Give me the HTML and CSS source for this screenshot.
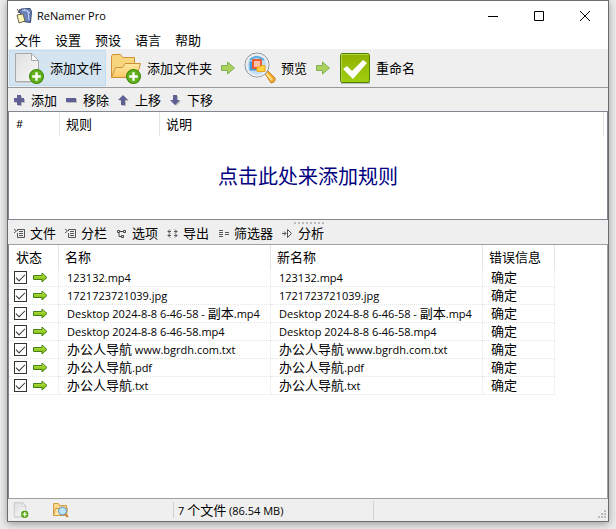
FILE: index.html
```
<!DOCTYPE html>
<html lang="zh-CN">
<head>
    <meta charset="UTF-8">
    <title>ReNamer Pro</title>
    <link rel="stylesheet" href="styles.css">
</head>
<body>
    <svg class="sprite" width="0" height="0" aria-hidden="true">
        <defs>
            <linearGradient id="g-paper" x1="0" y1="0" x2="1" y2="1"><stop offset="0" stop-color="#dedede"/><stop offset="1" stop-color="#fafafa"/></linearGradient>
            <linearGradient id="g-folder" x1="0" y1="0" x2="0" y2="1"><stop offset="0" stop-color="#ffe7a0"/><stop offset="1" stop-color="#f9c869"/></linearGradient>
            <linearGradient id="g-green" x1="0" y1="0" x2="0" y2="1"><stop offset="0" stop-color="#8fb000"/><stop offset="1" stop-color="#a0cf10"/></linearGradient>
            <linearGradient id="g-arrow" x1="0" y1="0" x2="0" y2="1"><stop offset="0" stop-color="#c8ea50"/><stop offset="1" stop-color="#6fb000"/></linearGradient>
        </defs>
        <symbol id="i-plus-badge" viewBox="0 0 14 14">
            <circle cx="7" cy="7" r="6.5" fill="#62b01c" stroke="#3d8b08"/>
            <path d="M7 3v8M3 7h8" stroke="#fff" stroke-width="2.2"/>
        </symbol>
        <symbol id="i-file-add" viewBox="0 0 32 32">
            <path d="M2.500 1.500h16l7 7v21h-23z" fill="url(#g-paper)" stroke="#aaa"/>
            <path d="M18.500 1.500v7h7z" fill="#fff" stroke="#aaa"/>
            <path d="M3 30.500h15" stroke="#ccc"/>
            <use href="#i-plus-badge" x="16" y="17" width="15" height="15"/>
        </symbol>
        <symbol id="i-folder-add" viewBox="0 0 32 32">
            <path d="M1.500 25.500v-21l1-2h8l2 3h12v6" fill="#f8d67e" stroke="#cf9136"/>
            <path d="M1.500 25.500l4-10h7l2.500-4h15.500l-4 14z" fill="url(#g-folder)" stroke="#cf9136"/>
            <use href="#i-plus-badge" x="16" y="17" width="15" height="15"/>
        </symbol>
        <symbol id="i-step" viewBox="0 0 16 14">
            <path d="M1.500 4.500h6v-3.500l7 6-7 6v-3.500h-6z" fill="#a9d15c" stroke="#83b057"/>
        </symbol>
        <symbol id="i-preview" viewBox="0 0 32 32">
            <path d="M20 20l3-2 8 8q1 4-4 5z" fill="#f3a82c" stroke="#c58225"/>
            <path d="M22 21l6 7" stroke="#ffe18a" stroke-width="2"/>
            <circle cx="13" cy="13" r="12" fill="#bce1f7" stroke="#7f8388"/>
            <circle cx="13" cy="13" r="10.500" fill="none" stroke="#eee" stroke-width="2"/>
            <path d="M5.500 9.500h8v9h-8z" fill="#4798d9"/>
            <path d="M9 8h8v8H9z" fill="#ffc0a8" stroke="#eb5b32" stroke-width="2"/>
            <path d="M13 15h3l1-1.500h4v6h-8z" fill="#ffd13d" stroke="#e9a41e"/>
            <path d="M6 8q6-6 14 0" fill="none" stroke="#5ea7dc" stroke-width="2"/>
        </symbol>
        <symbol id="i-rename" viewBox="0 0 32 32">
            <path d="M2 31h29" stroke="#bbb" stroke-width="2"/>
            <rect x="1.500" y="1.500" width="29" height="29" rx="2" fill="url(#g-green)" stroke="#507f08"/>
            <path d="M2.500 29v-26.500h27" fill="none" stroke="#b6d443"/>
            <path d="M4 17l4-3 5 5 11-11 4 3-14 16z" fill="#fff"/>
        </symbol>
        <symbol id="i-row-arrow" viewBox="0 0 15 11">
            <path d="M.5 3.500h8.500v-2.500l5 4.500-5 4.500v-2.500h-8.500z" fill="url(#g-arrow)" stroke="#428417"/>
        </symbol>
        <symbol id="i-columns" viewBox="0 0 11 11">
            <path d="M0 1l2.500 2L0 5M3.500 3V1.500h7v8h-7V5M5 3.500h4M5 5.500h4M5 7.500h4" fill="none" stroke="#555"/>
        </symbol>
    </svg>

    <main class="window">
        <header class="titlebar">
            <svg class="app-icon" viewBox="0 0 16 16">
                <path d="M5 1l9-.5 1.500 3-1 11-7-1-4-10z" fill="#6b82bd" stroke="#35456f"/>
                <path d="M6 2l6 1 1 9M8 1l6 4" fill="none" stroke="#c3d1f2"/>
                <path d="M1 7l6-1 2 7-6 2z" fill="#fbf5b5" stroke="#6a6650"/>
                <path d="M1 1l3 4M4 1L2 5" stroke="#555"/>
            </svg>
            <h1>ReNamer Pro</h1>
            <div class="controls">
                <button aria-label="最小化"><svg viewBox="0 0 10 10"><path d="M0 5.500h10" stroke="#000"/></svg></button>
                <button aria-label="最大化"><svg viewBox="0 0 10 10"><path d="M.5.500h9v9h-9z" fill="none" stroke="#000"/></svg></button>
                <button aria-label="关闭"><svg viewBox="0 0 10 10"><path d="M0 0l10 10M10 0L0 10" stroke="#000"/></svg></button>
            </div>
        </header>

        <nav class="menu">
            <button>文件</button>
            <button>设置</button>
            <button>预设</button>
            <button>语言</button>
            <button>帮助</button>
        </nav>

        <div class="toolbar">
            <button class="active"><svg><use href="#i-file-add"/></svg>添加文件</button>
            <button><svg><use href="#i-folder-add"/></svg>添加文件夹</button>
            <svg class="step"><use href="#i-step"/></svg>
            <button><svg><use href="#i-preview"/></svg>预览</button>
            <svg class="step"><use href="#i-step"/></svg>
            <button><svg><use href="#i-rename"/></svg>重命名</button>
        </div>

        <div class="subbar rule-bar">
            <button><svg viewBox="0 0 12 12"><path d="M5 2h4v3h3v4h-3v3h-4v-3h-3v-4h3z" fill="#bbb"/><path d="M4 1h4v3h3v4h-3v3h-4v-3h-3v-4h3z" fill="#606094"/></svg>添加</button>
            <button><svg viewBox="0 0 12 12"><path d="M2 5h10v4h-10z" fill="#bbb"/><path d="M1 4h10v4h-10z" fill="#606094"/></svg>移除</button>
            <button><svg viewBox="0 0 12 12"><path d="M7 2l5 5h-3v5h-4v-5h-3z" fill="#bbb"/><path d="M6 1l5 5h-3v5h-4v-5h-3z" fill="#606094"/></svg>上移</button>
            <button><svg viewBox="0 0 12 12"><path d="M5 2h4v5h3l-5 5-5-5h3z" fill="#bbb"/><path d="M4 1h4v5h3l-5 5-5-5h3z" fill="#606094"/></svg>下移</button>
        </div>

        <section class="rules">
            <table>
                <thead>
                    <tr><th class="num">#</th><th class="rule">规则</th><th>说明</th></tr>
                </thead>
            </table>
            <button class="add-rule">点击此处来添加规则</button>
        </section>

        <div class="subbar file-bar">
            <button><svg><use href="#i-columns"/></svg>文件</button>
            <button><svg><use href="#i-columns"/></svg>分栏</button>
            <button><svg viewBox="0 0 11 11"><path d="M1.500 2.500h2v2h-2zM7.500 2.500h2v2h-2zM5.500 7.500h2v2h-2zM4 3.500h3M3 5v3.500h2" fill="none" stroke="#444"/></svg>选项</button>
            <button><svg viewBox="0 0 11 11"><path d="M3 1.500L1 3.500l2 2M3 5.500L1 7.500l2 2M8 1.500l2 2-2 2M8 5.500l2 2-2 2M1 3.500h3M7 3.500h3M1 7.500h3M7 7.500h3" fill="none" stroke="#555"/></svg>导出</button>
            <button><svg viewBox="0 0 11 11"><path d="M1 2.500h4M1 4.500h4M1 6.500h4M1 8.500h4M7 4.500h4M7 6.500h4" fill="none" stroke="#555"/></svg>筛选器</button>
            <button><svg viewBox="0 0 11 11"><path d="M0 5.500h4M2 3.500l2 2-2 2M5.500 1.500v8l4-4z" fill="none" stroke="#555"/></svg>分析</button>
            <div class="splitter"></div>
        </div>

        <section class="files">
            <table>
                <thead>
                    <tr><th class="state">状态</th><th class="name">名称</th><th class="name">新名称</th><th class="error">错误信息</th></tr>
                </thead>
                <tbody>
                    <tr>
                        <td class="state"><input type="checkbox" aria-label="123132.mp4" checked><svg><use href="#i-row-arrow"/></svg></td>
                        <td>123132.mp4</td>
                        <td>123132.mp4</td>
                        <td><b>确定</b></td>
                    </tr>
                    <tr>
                        <td class="state"><input type="checkbox" aria-label="1721723721039.jpg" checked><svg><use href="#i-row-arrow"/></svg></td>
                        <td>1721723721039.jpg</td>
                        <td>1721723721039.jpg</td>
                        <td><b>确定</b></td>
                    </tr>
                    <tr>
                        <td class="state"><input type="checkbox" aria-label="Desktop 2024-8-8 6-46-58 - 副本.mp4" checked><svg><use href="#i-row-arrow"/></svg></td>
                        <td>Desktop 2024-8-8 6-46-58 - <b>副本</b>.mp4</td>
                        <td>Desktop 2024-8-8 6-46-58 - <b>副本</b>.mp4</td>
                        <td><b>确定</b></td>
                    </tr>
                    <tr>
                        <td class="state"><input type="checkbox" aria-label="Desktop 2024-8-8 6-46-58.mp4" checked><svg><use href="#i-row-arrow"/></svg></td>
                        <td>Desktop 2024-8-8 6-46-58.mp4</td>
                        <td>Desktop 2024-8-8 6-46-58.mp4</td>
                        <td><b>确定</b></td>
                    </tr>
                    <tr>
                        <td class="state"><input type="checkbox" aria-label="办公人导航 www.bgrdh.com.txt" checked><svg><use href="#i-row-arrow"/></svg></td>
                        <td><b>办公人导航</b> www.bgrdh.com.txt</td>
                        <td><b>办公人导航</b> www.bgrdh.com.txt</td>
                        <td><b>确定</b></td>
                    </tr>
                    <tr>
                        <td class="state"><input type="checkbox" aria-label="办公人导航.pdf" checked><svg><use href="#i-row-arrow"/></svg></td>
                        <td><b>办公人导航</b>.pdf</td>
                        <td><b>办公人导航</b>.pdf</td>
                        <td><b>确定</b></td>
                    </tr>
                    <tr>
                        <td class="state"><input type="checkbox" aria-label="办公人导航.txt" checked><svg><use href="#i-row-arrow"/></svg></td>
                        <td><b>办公人导航</b>.txt</td>
                        <td><b>办公人导航</b>.txt</td>
                        <td><b>确定</b></td>
                    </tr>
                </tbody>
            </table>
        </section>

        <footer class="status">
            <div class="status-icons">
                <svg><use href="#i-file-add"/></svg>
                <svg viewBox="0 0 16 16">
                    <path d="M.5 13.500v-12h5l1 2h7v10z" fill="#fbd987" stroke="#d39a45"/>
                    <path d="M.5 13.500l2-7h12l-1 7z" fill="#fde5a6" stroke="#d39a45"/>
                    <path d="M12 12l3 3" stroke="#d9822a" stroke-width="2"/>
                    <circle cx="9.500" cy="9" r="4" fill="#bfe4fa" stroke="#5c95bd"/>
                </svg>
            </div>
            <div class="count">7 <b>个文件</b> (86.54 MB)</div>
            <svg class="grip" viewBox="0 0 8 8"><path d="M6 0h2v2h-2zM3 3h2v2h-2zM6 3h2v2h-2zM0 6h2v2h-2zM3 6h2v2h-2zM6 6h2v2h-2z" fill="#bbb"/></svg>
        </footer>
    </main>
</body>
</html>
```
FILE: styles.css
```
* {
    margin: 0;
    padding: 0;
    box-sizing: border-box;
}
body {
    height: 100vh;
    padding: 0 7px 7px;
    background: #ececec;
    font-family: "Open Sans", "Noto Sans CJK SC", sans-serif;
    font-size: 11px;
    color: #000;
}
button {
    border: none;
    background: none;
    font-family: inherit;
    font-size: 13px;
    line-height: 18px;
    color: #000;
    white-space: nowrap;
}
/* Chinese text inside latin file names */
b {
    font-size: 13px;
    font-weight: normal;
}
.sprite {
    position: absolute;
}
.window {
    display: flex;
    flex-direction: column;
    height: 100%;
    border: 1px solid #6c6c6c;
    background: #fff;
    box-shadow: 0 2px 8px rgba(0, 0, 0, 0.35);
}
.titlebar {
    display: flex;
    align-items: center;
    height: 29px;
    padding-left: 8px;
}
.app-icon {
    width: 16px;
    height: 16px;
    margin-right: 5px;
}
.titlebar h1 {
    font-size: 11px;
    font-weight: normal;
}
.controls {
    display: flex;
    margin-left: auto;
}
.controls button {
    display: flex;
    align-items: center;
    justify-content: center;
    width: 46px;
    height: 29px;
}
.controls svg {
    width: 10px;
    height: 10px;
}
.menu {
    display: flex;
    gap: 14px;
    height: 19px;
    padding-left: 7px;
}
.toolbar {
    display: flex;
    align-items: center;
    height: 39px;
    padding-left: 1px;
    background: #efefef;
    border-bottom: 1px solid #999;
}
.toolbar button {
    display: flex;
    align-items: center;
    gap: 5px;
    height: 36px;
    padding: 0 4px;
}
.toolbar button.active {
    background: #d5e4f1;
    border: 1px solid #c0dcf3;
    padding: 0 3px;
}
.toolbar button svg {
    width: 32px;
    height: 32px;
}
.toolbar .step {
    width: 16px;
    height: 14px;
    margin: 0 4px;
}
.subbar {
    display: flex;
    align-items: center;
    position: relative;
    height: 23px;
    padding-left: 5px;
    background: #efefef;
}
.subbar button {
    display: flex;
    align-items: center;
    gap: 6px;
}
.rule-bar {
    gap: 8px;
}
.rule-bar svg {
    width: 12px;
    height: 12px;
}
.file-bar {
    gap: 9px;
    height: 24px;
    padding-top: 2px;
    padding-left: 6px;
}
.file-bar button {
    gap: 5px;
}
.file-bar svg {
    width: 11px;
    height: 11px;
}
.splitter {
    position: absolute;
    top: 2px;
    left: 50%;
    width: 30px;
    height: 2px;
    margin-left: -14px;
    background: repeating-linear-gradient(to right, #bbb 0 2px, transparent 2px 4px);
}
table {
    table-layout: fixed;
    border-collapse: separate;
    border-spacing: 0;
}
th {
    height: 24px;
    padding-left: 6px;
    border-right: 1px solid #e5e5e5;
    font-size: 13px;
    font-weight: normal;
    text-align: left;
    line-height: 18px;
}
.rules {
    display: flex;
    flex-direction: column;
    height: 109px;
    border: 1px solid #828790;
}
.rules table {
    width: 100%;
    padding-right: 3px;
}
.rules .num {
    width: 51px;
    padding-left: 7px;
    font-size: 11px;
}
.rules .rule {
    width: 100px;
}
.add-rule {
    flex: 1;
    padding-bottom: 2px;
    font-size: 20px;
    color: #000080;
}
.files {
    flex: 1;
    border: 1px solid #a0a0a0;
    border-left-color: #828790;
    overflow: hidden;
}
.files table {
    width: 546px;
}
.files .state {
    width: 50px;
}
.files th.state {
    padding-left: 7px;
}
.files .name {
    width: 212px;
}
.files .error {
    width: 72px;
}
.files td {
    height: 18px;
    padding-left: 8px;
    border-right: 1px dotted #e5e5e5;
    border-bottom: 1px dotted #e5e5e5;
    line-height: 17px;
    white-space: nowrap;
}
.files td b {
    line-height: 16px;
}
.files td.state {
    padding-left: 5px;
    font-size: 0;
}
.files td.state > * {
    vertical-align: middle;
}
.files td svg {
    width: 15px;
    height: 11px;
    margin-left: 6px;
}
.files input {
    appearance: none;
    width: 13px;
    height: 13px;
    border: 1px solid #333;
    background: #fff;
}
.files input:checked::before {
    content: "";
    display: block;
    width: 8px;
    height: 4px;
    margin: 2px auto;
    border-left: 1px solid #333;
    border-bottom: 1px solid #333;
    transform: rotate(-45deg);
}
.status {
    display: flex;
    align-items: center;
    height: 22px;
    background: #efefef;
}
.status-icons {
    display: flex;
    gap: 24px;
    width: 166px;
    padding-left: 5px;
    border-right: 1px solid #d0d0d0;
}
.status-icons svg {
    width: 16px;
    height: 16px;
}
.count {
    width: 200px;
    padding-left: 4px;
    border-right: 1px solid #d0d0d0;
    line-height: 19px;
}
.grip {
    width: 8px;
    height: 8px;
    margin: 8px 2px 0 auto;
}
```
